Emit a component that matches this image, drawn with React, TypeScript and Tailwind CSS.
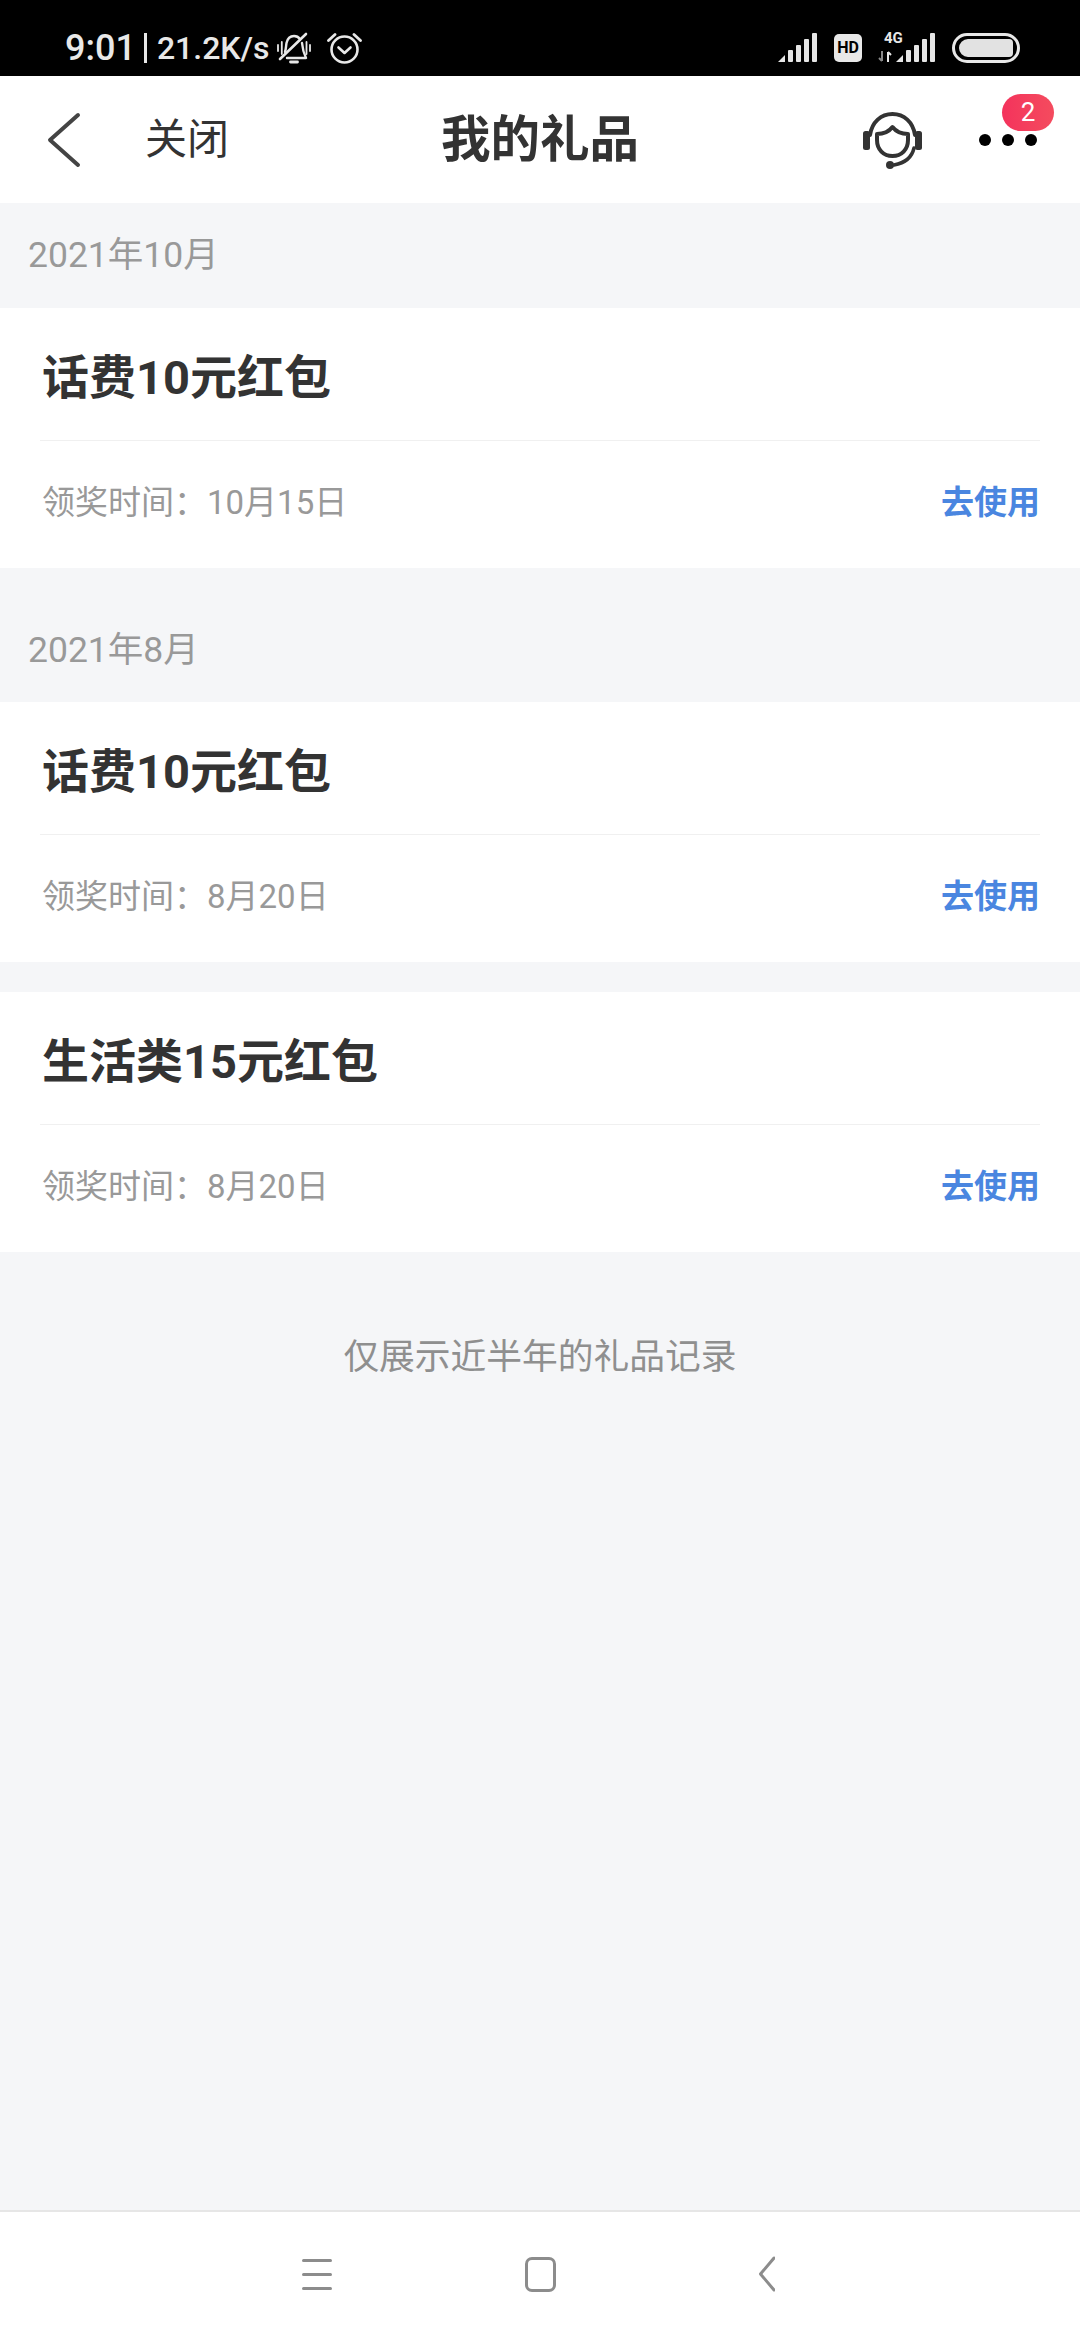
const FONT = "font-['Roboto','Noto_Sans_CJK_SC',sans-serif]";

function BellOff() {
  return (
    <svg width="34" height="32" viewBox="0 0 34 32" fill="none" stroke="#e8e8e8" strokeWidth="2.400" strokeLinecap="round" strokeLinejoin="round">
      <path d="M8 20c1-3 1-6 1.500-9C10.500 6.500 13.500 4 17 4c2.500 0 4.500 1 6 3" />
      <path d="M25 11c.5 5 1 9 4 15H10" />
      <path d="M13.500 30h7" strokeWidth="2.800" />
      <path d="M3 27 29 2" strokeWidth="2.600" />
      <path d="M1 13v6M4.800 10v12M29.500 10v12M33 13v6" strokeWidth="1.800" />
    </svg>
  );
}

function Alarm() {
  return (
    <svg width="35" height="32" viewBox="0 0 35 32" fill="none" stroke="#e8e8e8" strokeLinecap="round" strokeLinejoin="round">
      <circle cx="17.500" cy="17.500" r="13" strokeWidth="2.600" />
      <path d="m11.500 15.500 6 5.500 6-5.500" strokeWidth="2.600" />
      <path d="M1.500 8.500 8 2.500M33.500 8.500 27 2.500" strokeWidth="2.800" />
    </svg>
  );
}

function Signal() {
  return (
    <svg width="40" height="29" viewBox="0 0 40 29" fill="#e6e6e6">
      <path d="M0 29 7 22v7z" />
      <rect x="10" y="17" width="5" height="12" rx="1" />
      <rect x="18" y="12" width="5" height="17" rx="1" />
      <rect x="26" y="6" width="5" height="23" rx="1" />
      <rect x="34" y="0" width="5" height="29" rx="1" />
    </svg>
  );
}

function Headset() {
  return (
    <svg width="59" height="58" viewBox="0 0 59 58" fill="none" stroke="#333" strokeLinecap="round" strokeLinejoin="round">
      <path d="M7 24C9 11 18 3 29.500 3S50 11 52 24" strokeWidth="4" />
      <path d="M14 23c7 0 12-2.500 15.500-7 3.500 4.500 8.500 7 15.500 7v6c0 9.500-6.500 16-15.500 16S14 38.500 14 29z" strokeWidth="4" />
      <path d="M51 37c-2 9-9 15-20 17" strokeWidth="3.500" />
      <rect x="0" y="20" width="7" height="19" rx="2.500" fill="#333" stroke="none" />
      <rect x="52" y="20" width="7" height="19" rx="2.500" fill="#333" stroke="none" />
      <circle cx="27" cy="54" r="4" fill="#333" stroke="none" />
    </svg>
  );
}

function StatusBar() {
  return (
    <div className="flex h-[76px] items-center justify-between bg-black pl-[65px] pr-[60px] pt-[19px] text-[#e8e8e8]">
      <div className="flex items-center">
        <span className="text-[36px] leading-none font-medium">9:01</span>
        <span className="ml-[8px] h-[30px] w-[3px] bg-[#e8e8e8]" />
        <span className="ml-[10px] text-[32px] leading-none font-medium">21.2K/s</span>
        <span className="ml-[7px] flex"><BellOff /></span>
        <span className="ml-[16px] flex"><Alarm /></span>
      </div>
      <div className="flex items-center">
        <Signal />
        <span className="ml-[16px] flex h-[28px] w-[28px] items-center justify-center rounded-[5px] bg-[#e8e8e8] text-[16px] leading-none font-bold text-black">HD</span>
        <div className="relative ml-[16px] flex h-[29px] w-[58px] items-end justify-end">
          <span className="absolute left-[6px] top-[-3px] text-[15px] leading-[16px] font-bold">4G</span>
          <svg className="absolute left-0 bottom-0" width="14" height="11" viewBox="0 0 14 11" fill="none" strokeWidth="2">
            <path d="M4 0v10M1 7l3 3" stroke="#888" />
            <path d="M10 11V1M10 1l3 3" stroke="#e8e8e8" />
          </svg>
          <Signal />
        </div>
        <div className="ml-[16px] flex h-[30px] w-[68px] items-center rounded-full border-[3px] border-[#e8e8e8] px-[4px] py-[3px]">
          <div className="h-full w-full rounded-l-[9px] rounded-r-[4px] bg-[#e2e2e2]" />
        </div>
      </div>
    </div>
  );
}

function Header() {
  return (
    <div className="grid h-[127px] grid-cols-[1fr_auto_1fr] items-center bg-white text-[#333]">
      <div className="flex items-center pl-[46px]">
        <svg width="36" height="56" viewBox="0 0 36 56" fill="none" stroke="#444" strokeWidth="4" strokeLinecap="round" strokeLinejoin="round">
          <path d="M32 3 4 28l28 25" />
        </svg>
        <span className="ml-[63px] text-[42px] leading-none">关闭</span>
      </div>
      <span className="pt-[2px] text-[49.500px] leading-none font-bold">我的礼品</span>
      <div className="flex items-center justify-end pr-[43px]">
        <Headset />
        <div className="relative ml-[57px] flex gap-[11px]">
          <span className="h-[12px] w-[12px] rounded-full bg-black" />
          <span className="h-[12px] w-[12px] rounded-full bg-black" />
          <span className="h-[12px] w-[12px] rounded-full bg-black" />
          <span className="absolute left-[23px] top-[-40px] flex h-[37px] w-[52px] items-center justify-center rounded-full bg-gradient-to-r from-[#f4325c] to-[#f44b5e] text-[26px] leading-none text-white">2</span>
        </div>
      </div>
    </div>
  );
}

function GiftCard({ name, date }: { name: string; date: string }) {
  return (
    <div className="bg-white pl-[40px] pr-[40px]">
      <div className="flex h-[133px] items-center border-b border-[#f0f0f0] pl-[2px] pt-[6px]">
        <span className="text-[47px] leading-none font-bold text-[#333]">{name}</span>
      </div>
      <div className="flex h-[126.500px] items-center justify-between pb-[3px] pl-[2px]">
        <span className="text-[33px] leading-none text-[#999]">领奖时间：{date}</span>
        <span className="text-[33px] leading-none font-bold text-[#4a86e0]">去使用</span>
      </div>
    </div>
  );
}

function NavBar() {
  return (
    <div className="flex h-[130px] items-center border-t-2 border-[#e6e6e6] bg-white pl-[302px] pb-[4px]">
      <div className="flex w-[30px] flex-col gap-[11px]">
        <span className="h-[3px] rounded-full bg-[#8c8c8c]" />
        <span className="h-[3px] rounded-full bg-[#8c8c8c]" />
        <span className="h-[3px] rounded-full bg-[#8c8c8c]" />
      </div>
      <div className="ml-[193px] h-[35px] w-[31px] rounded-[7px] border-[3px] border-[#8c8c8c]" />
      <svg className="ml-[203px]" width="16" height="36" viewBox="0 0 16 36" fill="none" stroke="#8c8c8c" strokeWidth="3" strokeLinecap="round" strokeLinejoin="round">
        <path d="M15 2 1.500 18 15 34" />
      </svg>
    </div>
  );
}

export default function App() {
  return (
    <div className={`flex h-[2340px] w-[1080px] flex-col overflow-hidden bg-[#f5f6f8] ${FONT}`}>
      <StatusBar />
      <Header />
      <div className="flex-1">
        <div className="flex h-[105px] items-center pl-[28px] text-[35.500px] leading-none text-[#999]">2021年10月</div>
        <GiftCard name="话费10元红包" date="10月15日" />
        <div className="flex h-[134.500px] items-end pb-[34px] pl-[28px] text-[35.500px] leading-none text-[#999]">2021年8月</div>
        <GiftCard name="话费10元红包" date="8月20日" />
        <div className="h-[30.500px]" />
        <GiftCard name="生活类15元红包" date="8月20日" />
        <p className="mt-[88px] text-center text-[35.750px] leading-none text-[#8f8f8f]">仅展示近半年的礼品记录</p>
      </div>
      <NavBar />
    </div>
  );
}
